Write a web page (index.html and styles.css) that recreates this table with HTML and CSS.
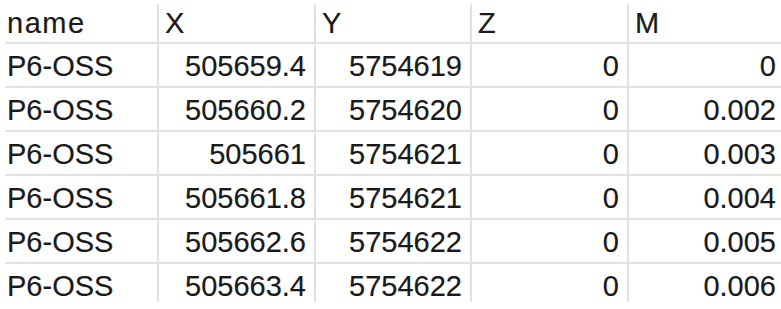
FILE: index.html
```html
<!DOCTYPE html>
<html>
<head>
<meta charset="utf-8">
<link rel="stylesheet" href="styles.css">
</head>
<body>
<div class="sheet">
<table class="grid">
<colgroup>
<col class="c1"><col class="c2"><col class="c3"><col class="c4"><col class="c5">
</colgroup>
<tr class="head"><td>name</td><td>X</td><td>Y</td><td>Z</td><td>M</td></tr>
<tr><td>P6-OSS</td><td class="num">505659.4</td><td class="num">5754619</td><td class="num">0</td><td class="num">0</td></tr>
<tr><td>P6-OSS</td><td class="num">505660.2</td><td class="num">5754620</td><td class="num">0</td><td class="num">0.002</td></tr>
<tr><td>P6-OSS</td><td class="num">505661</td><td class="num">5754621</td><td class="num">0</td><td class="num">0.003</td></tr>
<tr><td>P6-OSS</td><td class="num">505661.8</td><td class="num">5754621</td><td class="num">0</td><td class="num">0.004</td></tr>
<tr><td>P6-OSS</td><td class="num">505662.6</td><td class="num">5754622</td><td class="num">0</td><td class="num">0.005</td></tr>
<tr><td>P6-OSS</td><td class="num">505663.4</td><td class="num">5754622</td><td class="num">0</td><td class="num">0.006</td></tr>
</table>
</div>
</body>
</html>
```
FILE: styles.css
```css
html, body {
  margin: 0;
  padding: 0;
  background: #ffffff;
}
.sheet {
  margin: 4px 0 0 5px;
  height: 298px;
  overflow: hidden;
  width: 776px;
}
.grid {
  border-collapse: collapse;
  table-layout: fixed;
  width: 780px;
}
.c1 { width: 153px; }
.c2 { width: 157px; }
.c3 { width: 156px; }
.c4 { width: 157px; }
.c5 { width: 157px; }
.grid td {
  height: 44px;
  padding: 2px 8px 0 6px;
  border-right: 2px solid #e1e1e1;
  border-bottom: 2px solid #e1e1e1;
  font-family: "Liberation Sans", Arial, sans-serif;
  font-size: 29px;
  color: #1a1a1a;
  -webkit-text-stroke: 0.2px #1a1a1a;
  white-space: nowrap;
  box-sizing: border-box;
  line-height: 1;
  vertical-align: middle;
}
.grid td:first-child {
  padding-left: 2px;
}
.grid .head td {
  height: 39px;
  vertical-align: bottom;
  padding-bottom: 4px;
}
.grid .head td:first-child {
  letter-spacing: 1.5px;
}
.grid .num {
  text-align: right;
}
```
